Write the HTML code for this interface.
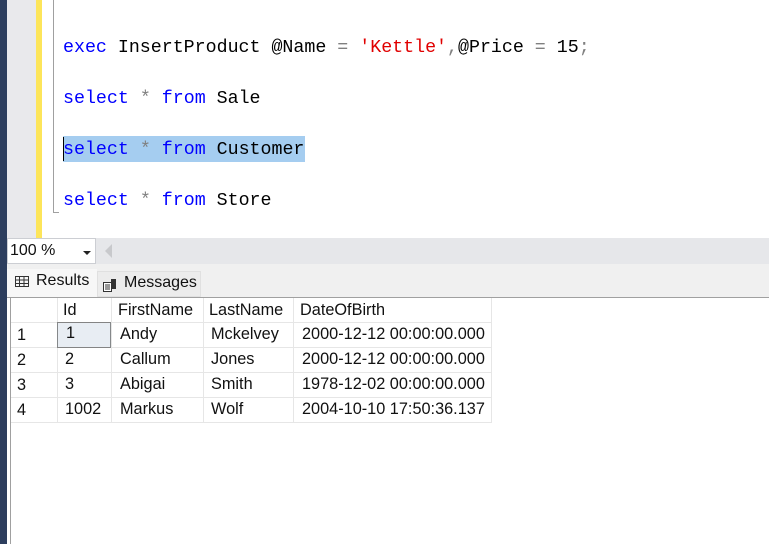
<!DOCTYPE html>
<html><head><style>
*{margin:0;padding:0;box-sizing:border-box}
body{width:769px;height:544px;overflow:hidden;background:#fff;position:relative;font-family:"Liberation Sans",Arial,sans-serif}
.a{position:absolute}
.code{position:absolute;left:63px;font-family:"Liberation Mono",monospace;font-size:18.3px;white-space:pre;color:#000;line-height:24px}
.k{color:#0000ff}.g{color:#808080}.s{color:#e00000}
.cell{position:absolute;font-size:16.3px;color:#111;line-height:25px;white-space:pre}
</style></head><body>
<div class="a" style="left:0;top:0;width:7px;height:544px;background:#2d3e5e"></div>
<div class="a" style="left:7px;top:0;width:29px;height:238px;background:#e9e9ec"></div>
<div class="a" style="left:36px;top:0;width:6px;height:238px;background:#fde55a"></div>
<div class="a" style="left:53px;top:0;width:1px;height:213px;background:#a0a0a0"></div>
<div class="a" style="left:53px;top:212px;width:6px;height:1px;background:#a0a0a0"></div>
<div class="a" style="left:63px;top:136px;width:242px;height:26px;background:#a5cdf0"></div>
<div class="a" style="left:63px;top:137px;width:1px;height:24px;background:#000"></div>
<div class="code" style="top:36px"><span class="k">exec</span> InsertProduct @Name <span class="g">=</span> <span class="s">'Kettle'</span><span class="g">,</span>@Price <span class="g">=</span> 15<span class="g">;</span></div>
<div class="code" style="top:87px"><span class="k">select</span> <span class="g">*</span> <span class="k">from</span> Sale</div>
<div class="code" style="top:138px"><span class="k">select</span> <span class="g">*</span> <span class="k">from</span> Customer</div>
<div class="code" style="top:189px"><span class="k">select</span> <span class="g">*</span> <span class="k">from</span> Store</div>

<div class="a" style="left:7px;top:238px;width:762px;height:26px;background:#e6e7ea"></div>
<div class="a" style="left:7px;top:238px;width:89px;height:26px;background:#fff;border:1px solid #ccced3"></div>
<div class="a" style="left:10px;top:242px;font-size:16px;color:#111">100 %</div>
<div class="a" style="left:83px;top:251px;width:0;height:0;border-left:4px solid transparent;border-right:4px solid transparent;border-top:4px solid #222"></div>
<div class="a" style="left:105px;top:244px;width:0;height:0;border-top:7px solid transparent;border-bottom:7px solid transparent;border-right:7px solid #c8c9cc"></div>
<div class="a" style="left:7px;top:264px;width:762px;height:33px;background:#f0f0f0"></div>
<div class="a" style="left:7px;top:269px;width:90px;height:29px;background:#f7f7f7"></div>
<svg class="a" style="left:15px;top:276px" width="14" height="11"><rect x="0.5" y="0.5" width="13" height="10" fill="none" stroke="#333"/><path d="M0 4H14M0 7.5H14M4.5 0V11M9 0V11" stroke="#333"/></svg>
<div class="a" style="left:36px;top:272px;font-size:16px;color:#111">Results</div>
<div class="a" style="left:97px;top:271px;width:104px;height:26px;background:#ececec;border:1px solid #e0e0e0"></div>
<svg class="a" style="left:103px;top:279px" width="14" height="13"><rect x="0.5" y="3.5" width="8" height="9" fill="#fff" stroke="#333"/><rect x="8" y="0" width="5" height="10" fill="#333"/><path d="M2 6H7M2 8H7M2 10H7" stroke="#333"/></svg>
<div class="a" style="left:124px;top:274px;font-size:16px;color:#111">Messages</div>
<div class="a" style="left:7px;top:297px;width:762px;height:1px;background:#a0a0a0"></div>
<div class="a" style="left:10px;top:298px;width:1px;height:246px;background:#a0a0a0"></div>

<svg class="a" style="left:11px;top:298px" width="481" height="125">
<g stroke="#e6e6e6" fill="none">
<path d="M0 24.5H481M0 49.5H481M0 74.5H481M0 99.5H481M0 124.5H481"/>
<path d="M46.5 0V125M100.5 0V125M192.5 0V125M282.5 0V125M480.5 0V125"/>
</g>
<rect x="46" y="25" width="54" height="24" fill="#e8edf3"/>
<rect x="46.5" y="24.5" width="53" height="25" fill="none" stroke="#222" stroke-dasharray="1 1"/>
</svg>
<div class="cell" style="left:63px;top:298px">Id</div>
<div class="cell" style="left:118px;top:298px">FirstName</div>
<div class="cell" style="left:209px;top:298px">LastName</div>
<div class="cell" style="left:300px;top:298px">DateOfBirth</div>

<div class="cell" style="left:17px;top:323px">1</div><div class="cell" style="left:66px;top:321px">1</div><div class="cell" style="left:120px;top:322px">Andy</div><div class="cell" style="left:211px;top:322px">Mckelvey</div><div class="cell" style="left:302px;top:322px">2000-12-12 00:00:00.000</div>
<div class="cell" style="left:17px;top:348px">2</div><div class="cell" style="left:65px;top:347px">2</div><div class="cell" style="left:120px;top:347px">Callum</div><div class="cell" style="left:211px;top:347px">Jones</div><div class="cell" style="left:302px;top:347px">2000-12-12 00:00:00.000</div>
<div class="cell" style="left:17px;top:373px">3</div><div class="cell" style="left:65px;top:372px">3</div><div class="cell" style="left:120px;top:372px">Abigai</div><div class="cell" style="left:211px;top:372px">Smith</div><div class="cell" style="left:302px;top:372px">1978-12-02 00:00:00.000</div>
<div class="cell" style="left:17px;top:398px">4</div><div class="cell" style="left:65px;top:397px">1002</div><div class="cell" style="left:120px;top:397px">Markus</div><div class="cell" style="left:211px;top:397px">Wolf</div><div class="cell" style="left:302px;top:397px">2004-10-10 17:50:36.137</div>
</body></html>
